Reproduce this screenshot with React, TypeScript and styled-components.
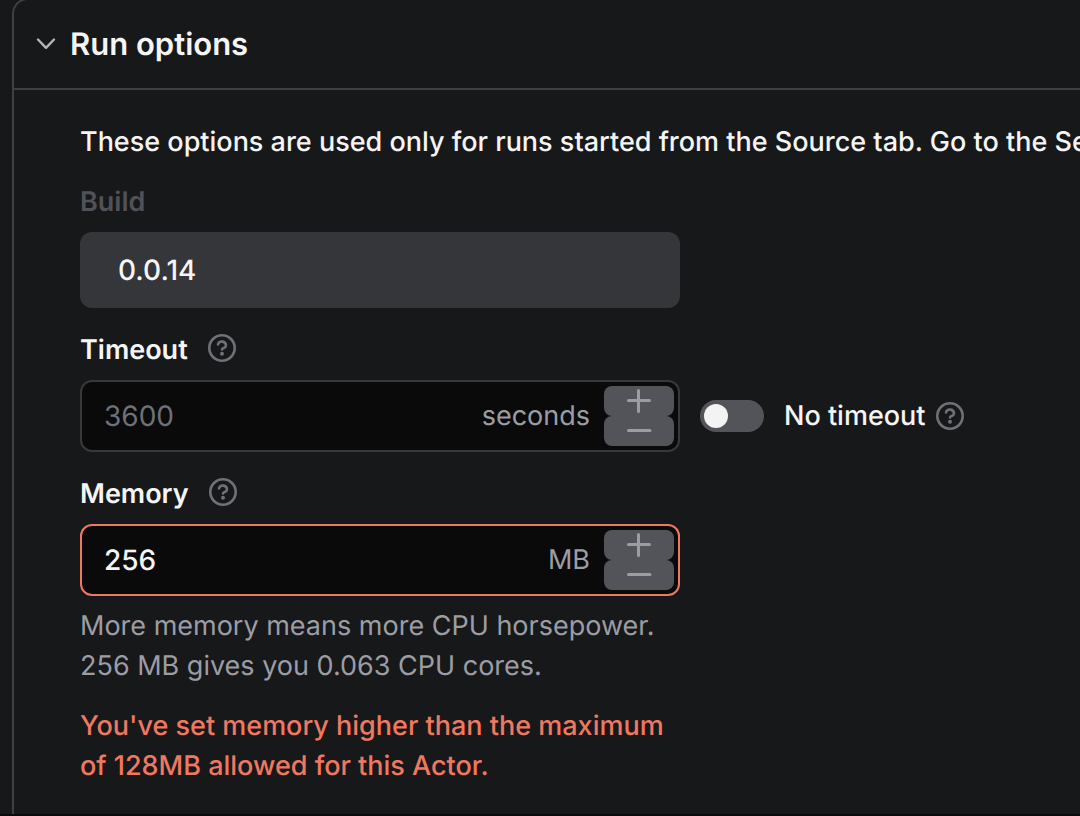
import React, { useState } from "react";
import styled, { createGlobalStyle, css } from "styled-components";

const c = {
  page: "#17181a",
  edge: "#404043",
  field: "#0a0a0a",
  fieldBorder: "#38393c",
  disabled: "#35363a",
  control: "#53545a",
  text: "#f5f5f6",
  muted: "#9c9da4",
  subtle: "#6f7078",
  faint: "#515258",
  danger: "#f07860",
};

const GlobalStyle = createGlobalStyle`
  *, *::before, *::after { box-sizing: border-box; }
  body {
    margin: 0;
    background: ${c.page};
    color: ${c.text};
    font-family: Inter, "Liberation Sans", sans-serif;
    font-size: 27px;
    line-height: 40px;
    text-rendering: geometricPrecision;
    overflow-x: hidden;
  }
  button, input, select { font: inherit; color: inherit; text-rendering: inherit; }
`;

const Page = styled.main`
  min-height: 100vh;
  display: flex;
  padding-left: 12px;
  border-bottom: 2px solid #0c090c;
`;

const Panel = styled.section`
  flex: 1;
  min-width: 0;
  margin-top: -2px;
  border: 2px solid ${c.edge};
  border-right: 0;
  border-bottom: 0;
  border-top-left-radius: 16px;
`;

const PanelHeader = styled.h2`
  margin: 0;
  font-size: 31px;
  font-weight: 600;
  border-bottom: 2px solid ${c.edge};
`;

const PanelToggle = styled.button`
  display: flex;
  align-items: center;
  gap: 14px;
  width: 100%;
  height: 88px;
  padding: 2px 22px 0;
  border: 0;
  background: none;
  cursor: pointer;
`;

const PanelBody = styled.div`
  padding: 32px 0 24px 66px;
`;

const Intro = styled.p`
  margin: 0 0 20px;
  font-weight: 500;
  white-space: nowrap;
  overflow: hidden;
`;

const FieldList = styled.form`
  display: flex;
  flex-direction: column;
  gap: 22px;
`;

const Field = styled.div`
  display: flex;
  flex-direction: column;
  gap: 10px;
`;

const LabelRow = styled.div`
  display: flex;
  align-items: center;
  gap: 20px;
  > button { margin-bottom: 4px; }
`;

const Label = styled.label<{ $faint?: boolean }>`
  font-weight: 600;
  color: ${(p) => (p.$faint ? c.faint : c.text)};
`;

const ControlRow = styled.div`
  display: flex;
  align-items: center;
  gap: 20px;
`;

const fieldBox = css`
  width: 600px;
  max-width: 100%;
  border-radius: 12px;
`;

const BuildSelect = styled.select`
  ${fieldBox}
  height: 76px;
  padding: 0 38px;
  border: 0;
  appearance: none;
  background: ${c.disabled};
  color: ${c.text};
  font-size: 28px;
  font-weight: 500;
  opacity: 1;
`;

const NumberBox = styled.div<{ $invalid?: boolean }>`
  ${fieldBox}
  display: flex;
  align-items: center;
  height: 72px;
  padding: 0 4px 0 22px;
  border: 2px solid ${(p) => (p.$invalid ? c.danger : c.fieldBorder)};
  background: ${c.field};
`;

const NumberInput = styled.input`
  flex: 1;
  min-width: 0;
  padding: 0;
  border: 0;
  outline: 0;
  background: none;
  font-size: 28px;
  font-weight: 500;
  &::placeholder { color: ${c.subtle}; opacity: 1; font-weight: 400; }
`;

const Unit = styled.span`
  margin-right: 14px;
  color: ${c.muted};
`;

const Stepper = styled.div`
  display: flex;
  flex-direction: column;
`;

const StepButton = styled.button`
  display: flex;
  align-items: center;
  justify-content: center;
  width: 70px;
  height: 30px;
  padding: 0;
  border: 0;
  border-radius: 8px;
  background: ${c.control};
  color: ${c.muted};
  cursor: pointer;
`;

const SwitchLabel = styled.label`
  display: flex;
  align-items: center;
  gap: 20px;
  font-weight: 500;
  cursor: pointer;
`;

const Switch = styled.input`
  appearance: none;
  display: flex;
  align-items: center;
  width: 64px;
  height: 32px;
  margin: 0;
  padding: 0 4px;
  border-radius: 16px;
  background: ${c.control};
  cursor: pointer;
  &::before {
    content: "";
    width: 24px;
    height: 24px;
    border-radius: 50%;
    background: #f3f3f3;
  }
  &:checked { justify-content: flex-end; }
`;

const SwitchGroup = styled.div`
  display: flex;
  align-items: center;
  gap: 10px;
`;

const HelpButton = styled.button`
  display: flex;
  padding: 0;
  border: 0;
  background: none;
  color: ${c.subtle};
  cursor: help;
`;

const Hint = styled.p<{ $danger?: boolean }>`
  max-width: 600px;
  margin: ${(p) => (p.$danger ? "10px 0 0" : "0")};
  font-weight: ${(p) => (p.$danger ? 500 : 400)};
  color: ${(p) => (p.$danger ? c.danger : c.muted)};
`;

const Chevron = () => (
  <svg width="20" height="20" viewBox="0 0 20 20" fill="none" stroke="#b4b5ba" strokeWidth="2.4" strokeLinecap="round" strokeLinejoin="round" aria-hidden="true">
    <path d="M2 4.5 10 12.8 18 4.5" />
  </svg>
);

const Help = ({ about }: { about: string }) => (
  <HelpButton type="button" aria-label={`Help: ${about}`}>
    <svg width="28" height="28" viewBox="0 0 28 28" fill="none" stroke="currentColor" strokeWidth="2.6" strokeLinecap="round" strokeLinejoin="round" aria-hidden="true">
      <circle cx="14" cy="14" r="12.7" />
      <path d="M10 10.4a4.1 4.1 0 0 1 8 1.2c0 2.4-4 2.6-4 3.8" />
      <circle cx="14" cy="19.8" r="2" fill="currentColor" stroke="none" />
    </svg>
  </HelpButton>
);

const StepIcon = ({ plus }: { plus?: boolean }) => (
  <svg width="26" height="26" viewBox="0 0 26 26" fill="none" stroke="currentColor" strokeWidth="3" strokeLinecap="round" aria-hidden="true">
    {plus ? <path d="M2.5 12.5H23.5M12.5 2.5V23.5" /> : <path d="M2.5 12.5H24" />}
  </svg>
);

type NumberFieldProps = {
  id: string;
  unit: string;
  value: string;
  placeholder?: string;
  invalid?: boolean;
  onChange: (value: string) => void;
};

const NumberField = ({ id, unit, value, placeholder, invalid, onChange }: NumberFieldProps) => {
  const step = (by: number) => onChange(String(Math.max(0, Number(value || placeholder || 0) + by)));
  return (
    <NumberBox $invalid={invalid}>
      <NumberInput
        id={id}
        type="text"
        inputMode="numeric"
        value={value}
        placeholder={placeholder}
        aria-invalid={invalid}
        onChange={(e) => onChange(e.target.value)}
      />
      <Unit>{unit}</Unit>
      <Stepper>
        <StepButton type="button" aria-label={`Increase ${id}`} onClick={() => step(1)}>
          <StepIcon plus />
        </StepButton>
        <StepButton type="button" aria-label={`Decrease ${id}`} onClick={() => step(-1)}>
          <StepIcon />
        </StepButton>
      </Stepper>
    </NumberBox>
  );
};

export default function App() {
  const [open, setOpen] = useState(true);
  const [timeout, setTimeoutValue] = useState("");
  const [memory, setMemory] = useState("256");

  return (
    <>
      <GlobalStyle />
      <Page>
        <Panel>
          <PanelHeader>
            <PanelToggle type="button" aria-expanded={open} onClick={() => setOpen(!open)}>
              <Chevron />
              Run options
            </PanelToggle>
          </PanelHeader>
          {open && (
            <PanelBody>
              <Intro>These options are used only for runs started from the Source tab. Go to the Settings</Intro>
              <FieldList>
                <Field>
                  <Label htmlFor="build" $faint>Build</Label>
                  <BuildSelect id="build" disabled defaultValue="0.0.14">
                    <option>0.0.14</option>
                  </BuildSelect>
                </Field>
                <Field>
                  <LabelRow>
                    <Label htmlFor="timeout">Timeout</Label>
                    <Help about="timeout" />
                  </LabelRow>
                  <ControlRow>
                    <NumberField id="timeout" unit="seconds" placeholder="3600" value={timeout} onChange={setTimeoutValue} />
                    <SwitchGroup>
                      <SwitchLabel>
                        <Switch type="checkbox" role="switch" />
                        No timeout
                      </SwitchLabel>
                      <Help about="no timeout" />
                    </SwitchGroup>
                  </ControlRow>
                </Field>
                <Field>
                  <LabelRow>
                    <Label htmlFor="memory">Memory</Label>
                    <Help about="memory" />
                  </LabelRow>
                  <NumberField id="memory" unit="MB" value={memory} invalid onChange={setMemory} />
                  <Hint>
                    More memory means more CPU horsepower.
                    <br />
                    256 MB gives you 0.063 CPU cores.
                  </Hint>
                  <Hint $danger role="alert">
                    You've set memory higher than the maximum of 128MB allowed for this Actor.
                  </Hint>
                </Field>
              </FieldList>
            </PanelBody>
          )}
        </Panel>
      </Page>
    </>
  );
}
